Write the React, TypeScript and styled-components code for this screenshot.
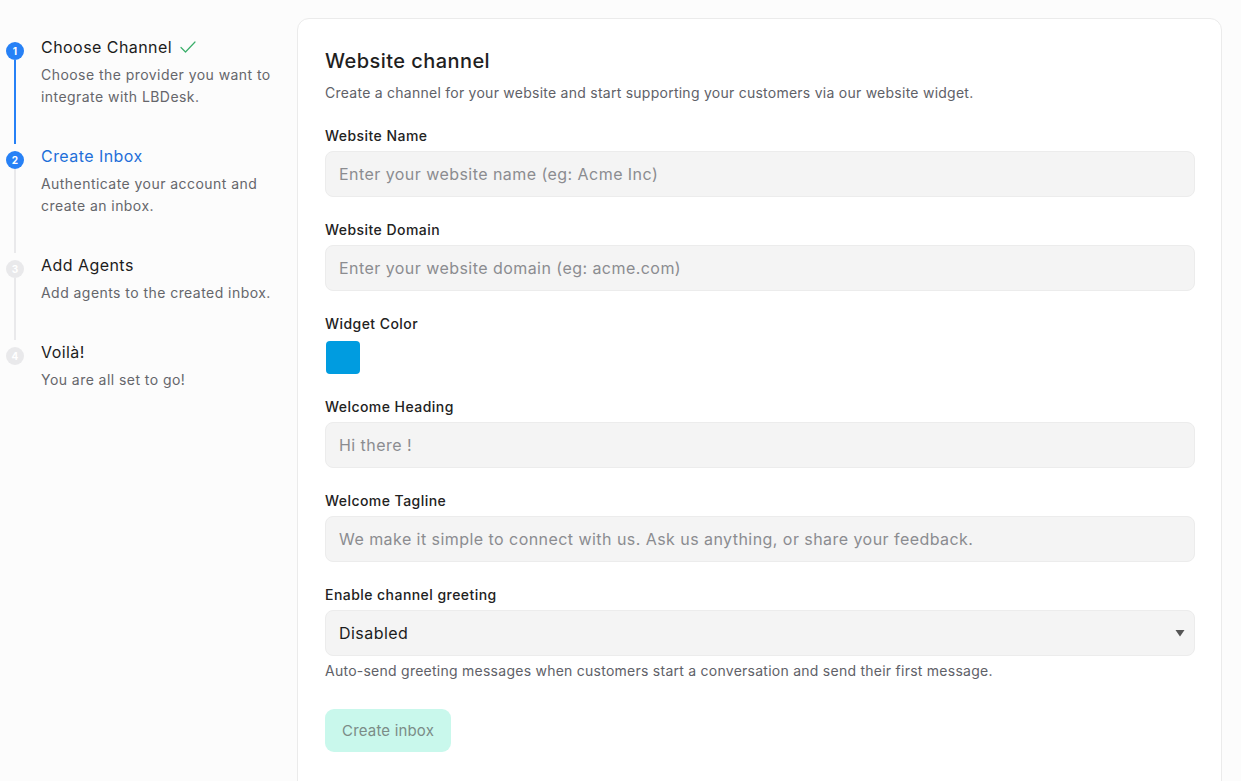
import React from "react";
import styled, { createGlobalStyle } from "styled-components";

const Global = createGlobalStyle`
  html, body { margin: 0; padding: 0; background: #fcfcfc; }
  body { font-family: Inter, "Noto Sans", sans-serif; letter-spacing: 0.028em; -webkit-font-smoothing: antialiased; }
  * { box-sizing: border-box; }
  input, select, button { letter-spacing: inherit; }
`;

const Page = styled.div`
  display: flex;
  align-items: flex-start;
  padding: 18px 19px 0 6px;
  min-height: 781px;
`;

const Sidebar = styled.nav`
  width: 291px;
  flex-shrink: 0;
  padding-top: 17px;
  display: flex;
  flex-direction: column;
`;

const Step = styled.div`
  display: flex;
  gap: 17px;
`;

const Rail = styled.div`
  width: 18px;
  padding-top: 7px;
  display: flex;
  flex-direction: column;
  align-items: center;
`;

const Dot = styled.div<{ $active: boolean }>`
  width: 18px;
  height: 18px;
  border-radius: 50%;
  background: ${(p) => (p.$active ? "#2781f6" : "#e9e9eb")};
  color: #fff;
  font-size: 10px;
  font-weight: 700;
  letter-spacing: 0;
  display: flex;
  align-items: center;
  justify-content: center;
  flex-shrink: 0;
`;

const Line = styled.div<{ $color: string }>`
  width: 2px;
  flex: 1;
  background: ${(p) => p.$color};
`;

const StepBody = styled.div<{ $last: boolean }>`
  padding-bottom: ${(p) => (p.$last ? "0" : "36px")};
`;

const StepTitle = styled.div<{ $current: boolean }>`
  font-size: 16px;
  line-height: 24px;
  font-weight: 400;
  color: ${(p) => (p.$current ? "#1f6fd9" : "#1c1c1c")};
  display: flex;
  align-items: center;
  gap: 7px;
  margin-bottom: 5px;
`;

const StepDesc = styled.div`
  font-size: 14px;
  line-height: 22px;
  color: #65666b;
  width: 245px;
`;

const Card = styled.main`
  flex: 1;
  background: #fff;
  border: 1px solid #ebebeb;
  border-radius: 12px;
  padding: 28px 26px 60px 27px;
  min-height: 800px;
`;

const Title = styled.h1`
  margin: 0;
  font-size: 20px;
  line-height: 28px;
  font-weight: 500;
  letter-spacing: 0.022em;
  color: #1f1f1f;
`;

const Subtitle = styled.p`
  margin: 8px 0 0;
  font-size: 14px;
  line-height: 20px;
  letter-spacing: 0.018em;
  color: #606168;
`;

const Fields = styled.div`
  margin-top: 23px;
  display: flex;
  flex-direction: column;
  gap: 23px;
`;

const Field = styled.div`
  display: flex;
  flex-direction: column;
`;

const Label = styled.label`
  font-size: 14px;
  line-height: 20px;
  font-weight: 500;
  color: #222;
  margin-bottom: 5px;
`;

const Input = styled.input`
  height: 46px;
  width: 100%;
  border: 1px solid #ececec;
  background: #f4f4f4;
  border-radius: 8px;
  padding: 0 13px;
  font-family: inherit;
  font-size: 16px;
  color: #1c1c1c;
  outline: none;
  &::placeholder { color: #8b8c90; }
`;

const Swatch = styled.div<{ $color: string }>`
  width: 34px;
  height: 33px;
  border-radius: 4px;
  background: ${(p) => p.$color};
  margin-top: 2px;
  margin-left: 1px;
`;

const SelectWrap = styled.div`
  position: relative;
`;

const Select = styled.select`
  appearance: none;
  -webkit-appearance: none;
  height: 46px;
  width: 100%;
  border: 1px solid #ececec;
  background: #f4f4f4;
  border-radius: 8px;
  padding: 0 13px;
  font-family: inherit;
  font-size: 16px;
  color: #1c1c1c;
  outline: none;
`;

const Arrow = styled.svg`
  position: absolute;
  right: 10px;
  top: 19px;
  pointer-events: none;
`;

const Help = styled.p`
  margin: 5px 0 0;
  font-size: 14px;
  line-height: 20px;
  letter-spacing: 0.018em;
  color: #606168;
`;

const Button = styled.button`
  margin-top: 28px;
  height: 43px;
  padding: 0 17px;
  border: none;
  border-radius: 9px;
  background: #c9f8ec;
  color: #7b8c87;
  font-family: inherit;
  font-size: 15px;
  letter-spacing: 0.012em;
  cursor: not-allowed;
`;

const steps = [
  { title: "Choose Channel", desc: "Choose the provider you want to integrate with LBDesk.", done: true },
  { title: "Create Inbox", desc: "Authenticate your account and create an inbox.", current: true },
  { title: "Add Agents", desc: "Add agents to the created inbox." },
  { title: "Voilà!", desc: "You are all set to go!" },
];

export default function App() {
  return (
    <>
      <Global />
      <Page>
        <Sidebar>
          {steps.map((s, i) => {
            const last = i === steps.length - 1;
            const active = i <= 1;
            return (
              <Step key={s.title}>
                <Rail>
                  <Dot $active={active}>{i + 1}</Dot>
                  {!last && <Line $color={i === 0 ? "#2781f6" : "#e9e9eb"} />}
                </Rail>
                <StepBody $last={last}>
                  <StepTitle $current={!!s.current}>
                    {s.title}
                    {s.done && (
                      <svg width="18" height="14" viewBox="0 0 18 14">
                        <path d="M2 7.5 L6.5 12 L16 2" fill="none" stroke="#3aae6a" strokeWidth="1.2" strokeLinecap="round" strokeLinejoin="round" />
                      </svg>
                    )}
                  </StepTitle>
                  <StepDesc>{s.desc}</StepDesc>
                </StepBody>
              </Step>
            );
          })}
        </Sidebar>
        <Card>
          <Title>Website channel</Title>
          <Subtitle>Create a channel for your website and start supporting your customers via our website widget.</Subtitle>
          <Fields>
            <Field>
              <Label>Website Name</Label>
              <Input placeholder="Enter your website name (eg: Acme Inc)" />
            </Field>
            <Field>
              <Label>Website Domain</Label>
              <Input placeholder="Enter your website domain (eg: acme.com)" />
            </Field>
            <Field>
              <Label>Widget Color</Label>
              <Swatch $color="#009ce0" />
            </Field>
            <Field>
              <Label>Welcome Heading</Label>
              <Input placeholder="Hi there !" />
            </Field>
            <Field>
              <Label>Welcome Tagline</Label>
              <Input placeholder="We make it simple to connect with us. Ask us anything, or share your feedback." />
            </Field>
            <Field>
              <Label>Enable channel greeting</Label>
              <SelectWrap>
                <Select defaultValue="disabled">
                  <option value="disabled">Disabled</option>
                  <option value="enabled">Enabled</option>
                </Select>
                <Arrow width="10" height="8" viewBox="0 0 10 8">
                  <path d="M0.5 1 L9.5 1 L5 7.5 Z" fill="#555" />
                </Arrow>
              </SelectWrap>
              <Help>Auto-send greeting messages when customers start a conversation and send their first message.</Help>
            </Field>
          </Fields>
          <Button disabled>Create inbox</Button>
        </Card>
      </Page>
    </>
  );
}
